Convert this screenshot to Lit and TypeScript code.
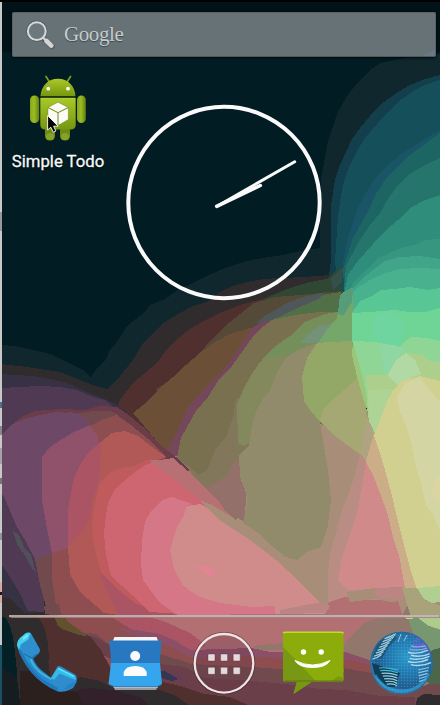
import { LitElement, html, css, svg } from "lit";
import { customElement } from "lit/decorators.js";

// Wallpaper colour bands, painted back to front.
const BANDS: [string, string][] = [
  ["#011218", "0,0 440,0 440,52 0,52"],
  ["#10272e", "440,54 420,56 400,59 380,63 369,71 360,80 350,92 343,103 337,114 333,127 328,142 325,157 321,180 320,215 320,248 300,251 283,255 262,258 243,262 220,270 205,277 193,283 178,290 165,299 150,305 145,312 136,319 127,326 122,334 116,343 110,350 106,359 97,368 91,377 83,370 67,362 50,354 33,350 15,346 0,345 0,705 440,705"],
  ["#123f4b", "440,75 425,79 410,85 395,94 380,105 370,116 360,128 352,139 347,150 340,165 335,180 331,205 331,260 329,276 340,320 440,320"],
  ["#15505a", "440,80 427,84 415,90 402,99 390,110 377,124 365,138 357,151 350,165 345,178 342,190 338,215 335,262 340,300 440,300"],
  ["#1a5567", "440,130 420,142 400,155 385,168 374,180 366,193 358,207 353,223 347,240 343,262 345,280 440,280"],
  ["#1d6563", "440,133 425,144 410,155 397,167 385,180 376,194 369,209 362,222 352,240 343,270 345,300 440,300"],
  ["#26756d", "440,158 425,165 410,174 398,185 388,199 380,213 370,225 358,243 346,266 343,300 440,300"],
  ["#2f8d7c", "440,195 425,200 410,208 398,220 385,231 373,244 358,261 348,275 343,300 440,300"],
  ["#37967f", "440,239 425,240 415,245 404,247 390,253 377,259 365,271 354,281 345,300 440,300"],
  ["#41a589", "440,259 420,256 400,257 385,261 373,270 362,279 350,291 345,310 440,310"],
  ["#4ab18f", "440,269 420,268 400,269 385,273 370,280 356,289 348,298 345,320 440,320"],
  ["#302b2d", "0,364 27,367 60,372 80,380 95,386 107,389 120,376 133,360 142,345 153,333 165,322 180,313 193,306 207,302 220,292 233,286 247,282 264,279 280,278 305,277 330,275 342,300 350,330 350,480 440,590 440,705 0,705"],
  // Muted ground under the translucent petals
  ["#a88d79", "200,470 350,400 440,450 440,630 330,640 230,560"],
  ["#50302f", "120,400 133,383 145,373 157,363 165,352 173,343 187,331 200,323 220,313 240,305 263,299 300,310 300,400 220,450 170,465 115,415"],
  ["#304734", "263,299 280,292 293,287 310,282 327,279 334,272 343,267 341,290 330,303 310,307"],
  ["#35504b", "331,279 336,273 343,267 342,282 333,290"],
  ["#544a37", "156,389 168,382 183,370 200,353 210,341 225,326 240,314 254,303 275,297 300,295 342,291 340,320 250,400 165,400"],
  ["#527048", "265,321 282,313 296,305 312,298 327,294 341,292 340,315 325,325 290,335"],
  ["#50575a", "256,323 266,315 277,309 287,303 303,297 326,292 318,299 300,307 283,315 272,320"],
  ["#6b4f36", "147,401 160,388 173,377 186,365 200,353 212,344 230,334 250,328 260,330 235,370 207,405 185,440 172,459 133,413 143,405"],
  ["#74485a", "252,328 262,322 276,319 262,331 246,347 235,364 222,381 209,399 195,418 184,437 178,459 166,457 168,448 178,430 187,408 199,395 209,384 221,373 233,357 244,341"],
  ["#b77073", "148,460 176,456 225,500 235,525 205,515"],
  ["#78704e", "177,457 181,438 187,427 196,411 208,397 218,381 232,366 242,352 252,338 260,329 272,320 295,315 320,312 337,312 337,560 280,560 220,500 195,475"],
  ["#82775b", "177,457 187,465 199,475 207,470 215,450 226,437 233,418 236,399 246,394 255,500 235,520 205,489"],
  ["#84895d", "237,405 243,390 251,375 261,361 274,350 287,339 300,327 314,318 326,314 350,312 350,345 330,360 290,415 244,446 238,443"],
  ["#748f59", "262,360 274,347 290,336 305,322 325,314 352,310 352,345 315,346 290,354"],
  ["#74927a", "300,343 307,335 320,326 335,323 328,337 315,343"],
  ["#a88d79", "225,505 240,480 318,422 367,453 361,500 352,560 350,603 329,610 297,577"],
  ["#93716a", "205,491 212,485 228,475 234,460 240,463 240,477 246,492 245,522 225,511"],
  ["#928b6b", "270,390 277,373 286,358 298,350 317,343 330,345 325,410 320,422 323,440 328,470 331,500 328,525 321,547 307,552 297,560 286,557 272,546 258,533 243,523 247,503 246,490 240,477 239,455 249,445 252,425 257,410 262,400"],
  ["#76a76a", "342,293 352,288 355,325 353,345 318,343 326,331 337,318"],
  ["#579c78", "340,295 353,288 352,302 343,316 338,313"],
  ["#93a767", "317,343 330,342 352,341 356,370 364,395 370,430 363,456 345,443 332,434 320,422 310,410 304,401 302,377 307,358"],
  ["#a6a873", "320,420 323,410 332,400 344,390 357,379 363,394 367,420 366,440 360,454 347,445 333,434"],
  ["#59c795", "440,288 428,290 410,287 395,289 381,290 372,296 360,301 352,313 353,330 440,330"],
  ["#6ed596", "440,308 425,312 410,312 395,310 370,312 352,313 352,342 375,352 440,352"],
  ["#6fd5a0", "372,327 374,317 387,311 400,319 404,327 401,339 395,347 382,344 374,336"],
  ["#8fd595", "440,341 427,338 412,337 405,341 400,347 385,344 375,342 353,341 355,360 358,380 366,405 374,435 392,400 440,390"],
  ["#8ed6a4", "380,343 398,346 404,350 396,362 389,374 385,374"],
  ["#99c678", "353,342 358,360 362,375 366,392 368,410 365,405 357,377 352,355"],
  ["#aece8c", "366,375 388,375 395,361 402,355 410,353 422,355 432,362 440,362 440,397 390,398 374,435 368,416"],
  ["#b0d9a3", "388,375 396,360 406,353 415,360 421,374 410,378 398,386"],
  ["#add495", "368,390 392,389 388,401 380,420 374,435 369,420"],
  ["#afa382", "367,416 375,434 367,464 360,455"],
  ["#b98c84", "360,453 367,462 373,480 405,587 400,600 365,600 328,606 328,570 331,550 336,533 342,510 350,490 355,475"],
  ["#cbae87", "375,430 366,461 368,480 403,590 417,590 409,550 397,517 391,492 385,470 379,450"],
  ["#cf8a89", "366,462 362,486 357,513 350,535 342,557 338,580 347,590 375,590 405,588 399,555 393,537 387,512 380,493 373,475"],
  ["#d2d090", "440,381 420,376 403,380 393,390 387,402 380,420 374,435 379,450 385,470 391,492 397,517 404,545 410,568 417,590 440,590"],
  ["#d3d6a3", "397,397 405,383 420,377 430,390 440,402 440,530 433,515 426,505 421,483 416,466 411,443 406,425 400,412"],
  ["#dcd5a1", "440,475 434,482 432,492 438,503 440,505"],
  ["#363143", "0,374 33,376 50,379 67,383 85,391 100,397 118,405 130,415 60,440 45,560 35,613 24,613 10,598 0,597"],
  ["#302b2d", "83,389 95,391 110,391 127,390 121,399 116,400 102,397"],
  ["#503a53", "0,388 40,386 60,387 77,390 93,397 105,400 118,410 80,450 44,560 44,612 28,611 18,590 8,574 0,562"],
  ["#6b3d49", "13,423 23,416 35,411 60,409 85,410 100,406 117,407 126,413 147,430 160,445 176,457 190,470 180,475 160,480 100,420 30,425"],
  ["#704a4d", "66,412 80,413 93,411 111,411 119,415 105,424 91,426 83,417"],
  ["#6e4867", "0,436 13,424 24,419 40,415 57,412 79,414 91,424 98,436 101,443 105,540 67,549 52,553 35,559 26,542 16,525 6,501 0,490"],
  ["#50505a", "13,531 19,535 24,547 31,555 36,573 33,570 26,557 17,544"],
  ["#8f526a", "42,457 50,447 62,439 74,432 90,425 96,432 101,443 93,530 68,549 52,553 48,534 42,500"],
  ["#704a4d", "35,559 52,553 60,560 64,590 64,614 48,614 40,585"],
  ["#8e4d4f", "90,426 104,419 117,415 131,425 148,439 167,457 152,464 100,455 98,436"],
  ["#8e4d4f", "52,553 68,548 80,570 90,590 110,600 150,612 150,650 92,650 77,640 64,625 56,605 52,578"],
  ["#ab5564", "101,442 88,453 80,465 75,476 72,487 68,510 68,547 84,529 96,514 105,475"],
  ["#b15956", "101,442 112,433 125,431 138,436 151,446 166,457 148,463 125,480 110,540 125,600 126,616 104,613 80,592 70,574 68,547 84,529 91,516 92,502 99,481"],
  ["#ab5564", "98,571 106,577 115,586 139,603 153,611 190,613 190,633 156,641 120,622 114,606"],
  ["#c05b5d", "100,482 109,473 121,468 135,466 149,459 158,474 120,510 113,560 130,590 151,609 136,604 115,587 101,572 95,551 92,530 93,512"],
  ["#b77073", "150,460 160,460 173,458 189,472 207,490 220,503 231,520 210,520 181,500 160,480"],
  ["#d08b8b", "187,506 196,497 213,508 230,520 250,538 270,552 290,566 310,589 328,603 325,620 200,620 183,586 170,550 177,527"],
  ["#cd6670", "145,465 152,463 174,479 202,501 210,510 190,545 185,585 190,604 180,614 150,612 132,595 111,576 106,555 104,533 106,515 108,503 115,489 130,476"],
  ["#d57786", "163,500 171,497 192,504 187,506 183,517 177,527 170,550 174,569 183,586 200,597 220,603 252,607 275,606 275,620 185,620 160,603 143,580 141,565 142,540 145,522 151,511"],
  ["#d08b8b", "187,506 200,504 213,511 230,530 240,580 210,598 183,586 174,569 170,550 177,527 183,517"],
  ["#e08591", "191,566 207,566 213,569 217,575 210,577 201,570"],
  ["#a88d79", "200,501 212,505 230,516 252,533 275,552 296,570 317,590 333,607 322,605 300,582 276,560 250,540 218,519"],
  ["#b27073", "140,616 260,614 325,614 329,602 345,597 370,600 398,601 403,616 440,650 440,705 230,705 180,650"],
  ["#a88d79", "346,592 375,588 403,587 402,601 390,602 375,599 350,602"],
  ["#ba8583", "375,588 403,588 403,600 375,597"],
  ["#ba8583", "280,610 300,606 322,602 330,606 326,613 280,614"],
  ["#ab5564", "110,616 146,616 166,622 190,633 206,645 190,655 156,645"],
  ["#92776c", "347,640 357,630 365,622 380,618 402,616 410,600 440,610 440,650 430,705 370,705 343,648"],
  ["#92776c", "253,646 270,644 286,643 286,650 256,650"],
  ["#a9a37c", "402,588 417,588 425,600 440,606 440,635 422,629 410,614"],
  ["#b0cf90", "417,588 440,586 440,602 432,603 424,599"],
  ["#d0cd8c", "403,616 413,616 413,619 406,619"],
  ["#aecb8c", "417,617 440,617 440,629 429,626"],
  ["#779771", "408,619 418,618 427,625 440,630 440,670 424,665 416,641"],
  ["#8b5068", "105,626 130,629 160,634 176,641 190,650 252,648 270,652 345,652 370,660 372,705 200,705 150,660 108,645"],
  ["#8e4d4f", "56,614 80,616 110,622 125,632 160,642 175,649 192,658 252,656 290,659 350,660 375,666 375,705 130,705"],
  ["#704a4d", "80,632 96,634 112,647 160,654 192,664 253,667 290,670 343,668 372,673 424,686 440,678 440,705 150,705 105,653"],
  ["#4c664c", "425,660 432,650 440,648 440,684 430,684 424,679"],
  ["#6b3f49", "77,633 95,637 112,646 112,660 160,664 185,667 205,678 253,681 285,684 320,689 346,690 380,696 415,697 415,705 200,705 90,648"],
  ["#653e56", "159,674 168,671 180,675 188,681 174,680"],
  ["#50302f", "38,615 52,614 60,628 75,633 90,636 101,650 110,667 120,682 163,682 180,686 205,694 230,697 248,705 70,705 51,684 47,650"],
  ["#363653", "160,671 165,671 178,679 172,681 161,678"],
  ["#62512f", "54,616 66,616 67,621 78,629 88,637 80,635 64,630 58,626"],
  ["#704a4d", "44,606 59,604 61,615 53,615 45,614"],
  ["#302b2d", "80,677 100,681 112,687 160,690 176,696 189,705 65,705 65,690"],
  ["#302b2d", "0,597 10,599 22,612 38,616 44,626 48,643 49,660 35,680 20,705 0,705"],
  ["#32202a", "76,690 90,688 113,690 140,697 148,705 76,705"],
  ["#2c201e", "20,671 30,671 49,687 78,692 82,705 20,705"],
  ["#032026", "0,616 6,618 10,626 13,637 15,652 17,672 17,678 7,673 0,665"],
  ["#151d21", "0,665 7,671 17,678 19,692 20,705 0,705"],
  ["#302b2d", "416,705 417,698 424,694 440,695 440,705"],
];

@customElement("home-wallpaper")
class HomeWallpaper extends LitElement {
  static styles = css`
    :host { display: block; }
    .art { display: block; width: 440px; height: 705px; }
  `;
  render() {
    return html`<svg class="art" viewBox="0 0 440 705" shape-rendering="crispEdges">
      <rect width="440" height="705" fill="#021c23" />
      ${BANDS.map(([fill, pts]) => svg`<polygon points=${pts} fill=${fill} />`)}
      <rect width="2" height="705" fill="#c6c9c6" />
      <rect y="212" width="2" height="19" fill="#959b9b" />
      <rect y="402" width="2" height="6" fill="#536f87" />
      <rect y="426" width="2" height="9" fill="#858989" />
      <rect y="448" width="2" height="16" fill="#a0a5a5" />
      <rect y="478" width="2" height="6" fill="#727878" />
      <rect y="533" width="2" height="7" fill="#909797" />
      <rect y="582" width="2" height="21" fill="#d5a7a5" />
      <rect y="592" width="2" height="3" fill="#191919" />
      <rect y="645" width="2" height="60" fill="#1b5064" />
      <rect width="440" height="2" fill="#000" />
    </svg>`;
  }
}

@customElement("search-bar")
class SearchBar extends LitElement {
  static styles = css`
    :host { display: block; }
    .bar {
      display: flex; align-items: center; gap: 10px; height: 45px; box-sizing: border-box;
      padding-left: 14px; border-radius: 2px; border: 1px solid #586264; border-bottom-color: #4d5a58;
      background: linear-gradient(156deg, transparent 97.5%, #697987 97.5%), #677276;
      box-shadow: 0 1px 3px #000c12;
    }
    .glass { width: 29px; height: 30px; flex: none; margin-left: -1px; }
    .name {
      font: 21px/24px "Liberation Serif", serif; color: #c5cbce; letter-spacing: -0.4px;
      text-shadow: 0 1px 1px #39454a; margin: -1px 0 0 -1px;
    }
  `;
  render() {
    return html`<div class="bar">
      <svg class="glass" viewBox="0 0 29 30">
        <path d="M18.5 19.5 26 26.5" stroke="#515c60" stroke-width="5.5" stroke-linecap="round" />
        <circle cx="10.8" cy="11.2" r="8.9" fill="none" stroke="#4f5b60" stroke-width="3.4" />
        <circle cx="10.8" cy="11.2" r="8.9" fill="#6c787c" stroke="#d8dad9" stroke-width="2" />
        <path d="M17 17.5 20.5 21" stroke="#d3d5d4" stroke-width="2.3" />
        <path d="M20.5 21 25.3 25.7" stroke="#d3d5d4" stroke-width="4.6" stroke-linecap="round" />
      </svg>
      <span class="name">Google</span>
    </div>`;
  }
}

@customElement("app-shortcut")
class AppShortcut extends LitElement {
  static styles = css`
    :host { display: block; }
    .cell { display: flex; flex-direction: column; align-items: center; width: 92px; }
    .robot { width: 60px; height: 70px; }
    .label {
      font: 400 16.7px/20px Roboto, sans-serif; color: #f7f9f9; white-space: nowrap;
      text-shadow: 0 1px 2px #000; margin-top: 9px; -webkit-text-stroke: 0.3px #f7f9f9;
    }
  `;
  render() {
    return html`<div class="cell">
      <svg class="robot" viewBox="28 73 60 70">
        <defs>
          <linearGradient id="skin" x2="0" y2="1"><stop stop-color="#a9c828" /><stop offset="1" stop-color="#76960f" /></linearGradient>
          <linearGradient id="limb"><stop stop-color="#87a51c" /><stop offset=".45" stop-color="#9cbc24" /><stop offset="1" stop-color="#60800d" /></linearGradient>
        </defs>
        <path d="M46 76.5 49.5 82M70.5 76.5 67 82" stroke="#809c20" stroke-width="1.7" stroke-linecap="round" />
        <rect x="45" y="125" width="10" height="15.5" rx="4.5" fill="#6d8b12" />
        <rect x="60" y="125" width="10" height="15.5" rx="4.5" fill="#6d8b12" />
        <ellipse cx="50" cy="136.5" rx="4" ry="3.5" fill="#86a22a" />
        <ellipse cx="65" cy="136.5" rx="4" ry="3.5" fill="#86a22a" />
        <rect x="30" y="95.5" width="9.2" height="27.5" rx="4.5" fill="url(#limb)" />
        <rect x="77" y="95.5" width="8.8" height="27.5" rx="4.4" fill="url(#limb)" />
        <path d="M40.5 96.3C41 86 48 78.8 58 78.8s17 7.2 17.5 17.5Z" fill="url(#skin)" />
        <path d="M40.3 98H75.7V124.5q0 5-5 5H45.3q-5 0-5-5Z" fill="url(#skin)" />
        <path d="M40.3 97.1H75.7" stroke="#203608" stroke-width="1.2" />
        <path d="M41 98.3H75" stroke="#b8d343" stroke-width=".7" />
        <circle cx="48.3" cy="88.7" r="1.9" fill="#f6f9eb" />
        <circle cx="68" cy="88.7" r="1.9" fill="#f6f9eb" />
        <path d="M48 107.5 58 102.2 68.3 107.5V119.5L58 125.5 48 119.8Z" fill="#fbfbf8" stroke="#5f7a12" stroke-width=".4" />
        <path d="M48 107.5 58 112.7 68.3 107.5M58 112.7V125" fill="none" stroke="#7b9721" stroke-width="1.1" />
        <path d="M47.6 115.5V130l3.2-2.8 2.4 5 2.7-1.2-2.3-4.8h4.5Z" fill="#050505" stroke="#fff" stroke-width=".9" />
      </svg>
      <span class="label">Simple Todo</span>
    </div>`;
  }
}

@customElement("analog-clock")
class AnalogClock extends LitElement {
  static styles = css`
    :host { display: block; }
    .face { display: block; width: 198px; height: 198px; }
  `;
  render() {
    return html`<svg class="face" viewBox="125 104 198 198">
      <circle cx="224" cy="202.5" r="95.7" fill="none" stroke="#fafafa" stroke-width="4" />
      <path d="M217 206.3 294.7 161.7" stroke="#fafafa" stroke-width="3" stroke-linecap="round" />
      <path d="M216.7 206.3 260.3 185.5" stroke="#fafafa" stroke-width="3.6" stroke-linecap="round" />
    </svg>`;
  }
}

@customElement("home-dock")
class HomeDock extends LitElement {
  static styles = css`
    :host { display: block; }
    .line { height: 2px; margin: 0 1px 0 9px; background: #c9b9b8; opacity: .85; box-shadow: 0 0 1px 0.5px #9b8585; }
    .row { display: flex; align-items: center; justify-content: space-between; padding: 11px 5px 0 14px; }
    .icon { width: 66px; height: 70px; flex: none; }
    .contacts { margin: 0 1px 0 -1px; }
    .drawer { margin: 0 1px 0 -1px; }
  `;
  phone() {
    return html`<svg class="icon" viewBox="14 628 66 70">
      <defs><linearGradient id="ph" x1="0" y1="0" x2="1" y2="1"><stop stop-color="#2da5d4" /><stop offset=".5" stop-color="#2687c7" /><stop offset="1" stop-color="#2b91d4" /></linearGradient></defs>
      <path d="M17 645Q17 641 20 638L26 633Q29 631.5 31 633.5L39.7 649Q40.5 652 38 654L33 658.7Q36 666 43 671.5L51 677.8 57.5 666.5Q59 665.7 61 666.5L75 674.5Q77.5 676.5 76.5 682L73 688Q66 692.5 58 691.5 42 685 31 672 20 658 17 645Z" fill="url(#ph)" />
      <path d="M22 651Q30 670 43 679.5L58 688 57 691Q41 684 30 670.5 20 657.5 17.5 647Z" fill="#1f70b3" opacity=".75" />
      <path d="M21 645 29 640 31 635 39.7 650 38 653.5 32 658 24 654Z" fill="#2f8fce" />
      <path d="M17 645Q17 641 20 638L26 633 30.5 633 28 639.5 20.5 644.5 19 650Z" fill="#43d0ec" />
      <path d="M23 639 28 635" stroke="#7aeafa" stroke-width="2" />
      <path d="M24 654 32 658 37 654" fill="none" stroke="#2071b0" stroke-width="1.2" />
      <path d="M30.5 659Q34 668 43 674.5L51.5 679.5" fill="none" stroke="#3fb4e2" stroke-width="2" />
      <path d="M54 679 59 670 75.5 679 75 684 72 687 62 690 52 684Z" fill="#2f8dcd" />
      <path d="M51 678 58 667.3 75.5 676.5 76 680 69 677.5 59.5 673.5 54 680Z" fill="#32bce6" />
      <path d="M58.5 668.5 74 676.5" stroke="#5be2f6" stroke-width="1.5" />
      <path d="M62 691 74 687 76.5 681 68 684.5Z" fill="#1f7cc0" opacity=".6" />
    </svg>`;
  }
  contacts() {
    return html`<svg class="icon contacts" viewBox="102 628 66 70">
      <path d="M114.5 637H156.5L159 643H112Z" fill="#f3f5f6" />
      <path d="M112 684H159L156 690H115Z" fill="#969a9e" />
      <path d="M113 686H158L157.5 688H114Z" fill="#b9babb" />
      <path d="M109 641 113 640.5H157.5L161.7 641.5 160 658V663.3H111L110.5 653Z" fill="#2878c1" />
      <path d="M111 663H160L162 684Q159 686.5 156 686.5H114L108.5 684Z" fill="#35a6ed" />
      <path d="M109 684.5 114 686.5H157L161.5 684.5" fill="none" stroke="#2177b7" stroke-width=".8" />
      <circle cx="135.2" cy="656" r="5" fill="#fafafa" />
      <path d="M123.7 676V672Q126 666 135.2 666T146.7 672V676Z" fill="#fafafa" />
    </svg>`;
  }
  drawer() {
    return html`<svg class="icon drawer" viewBox="191 628 66 70">
      <circle cx="224" cy="663.3" r="29.8" fill="#663747" fill-opacity=".28" stroke="#39202a" stroke-width="3" stroke-opacity=".5" />
      <circle cx="224" cy="663.3" r="29.3" fill="none" stroke="#eee3e5" stroke-width="2.3" />
      ${[654, 667.3].map((y) => [208, 220.6, 233.2].map((x) => svg`<rect x=${x} y=${y} width="7" height="7" rx=".7" fill="#e5d9dc" stroke="#54313c" stroke-width=".4" />`))}
    </svg>`;
  }
  message() {
    return html`<svg class="icon" viewBox="280 628 66 70">
      <path d="M285 632H341.5Q343.5 632 343.5 634V679.5Q343.5 681.5 341.5 681.5H312L293.5 694 297 681.5H285Q283 681.5 283 679.5V634Q283 632 285 632Z" fill="#8cac0c" />
      <path d="M283 647 297 661Q305 669 324 671L343.5 678V679.5Q343.5 681.5 341.5 681.5H312L293.5 694 297 681.5H285Q283 681.5 283 679.5Z" fill="#789713" />
      <path d="M297 661 310 675 316 681H332L343.5 672V669L333 660Z" fill="#8cac0c" />
      <path d="M283.3 633.2Q284 632.3 286 632.3H341Q343 632.3 343.3 633.5" fill="none" stroke="#c1dd27" stroke-width="1.6" />
      <path d="M285 681H341.5" stroke="#5a7411" stroke-width="1" />
      <circle cx="303.5" cy="652" r="2.7" fill="#fff" /><circle cx="321.2" cy="652" r="2.7" fill="#fff" />
      <path d="M295 660.5Q299 667.5 312.5 667.5T330 660.5Q321 665 312.5 665T295 660.5Z" fill="#fff" stroke="#fff" />
    </svg>`;
  }
  globe() {
    const rows = (n: number) => Array.from({ length: n }, (_, i) => i);
    return html`<svg class="icon" viewBox="369 628 66 70">
      <defs>
        <radialGradient id="sea" cx=".58" cy=".4" r=".62"><stop stop-color="#2f9fcf" /><stop offset=".5" stop-color="#2379b1" /><stop offset=".8" stop-color="#235f8f" /><stop offset="1" stop-color="#318fc1" /></radialGradient>
        <pattern id="dots" width="3" height="3" patternUnits="userSpaceOnUse"><circle cx="1" cy="1" r=".6" fill="#123f72" /><rect x="2" y="2" width="1" height="1" fill="#3ca4cd" /></pattern>
        <clipPath id="ball"><circle cx="401.5" cy="663" r="31" /></clipPath>
      </defs>
      <circle cx="401.5" cy="663" r="31.3" fill="url(#sea)" />
      <g clip-path="url(#ball)" fill="none">
        <circle cx="401.5" cy="663" r="31" fill="url(#dots)" opacity=".5" />
        <path d="M378 641 390 633 397 638 388 648 382 659 373 656Z" fill="#1d587f" />
        <path d="M372 663 381 666 388 669 400 673 395 687 387 687 375 676Z" fill="#103d59" />
        ${rows(8).map((i) => svg`<path d=${`M${372.5 + i * 1.7} ${659 - i * 2.9}q5 -1 ${9 + i * 0.3} ${-4.5 - i * 0.1}`} stroke="#a8d1dc" stroke-width="1.2" />`)}
        ${rows(7).map((i) => svg`<path d=${`M${379 + i * 1.3} ${668 + i * 2.7}q8 -1 ${19 - i * 1.5} 2`} stroke=${i < 2 ? "#43bcd2" : "#9acfdd"} stroke-width="1.2" />`)}
        ${rows(7).map((i) => svg`<path d=${`M${411 - (i % 3) * 1.5} ${646 + i * 3.1}q10 2.5 20 -2`} stroke=${i < 2 ? "#9a9be6" : "#b4d8ea"} stroke-width="1.4" />`)}
        ${rows(5).map((i) => svg`<path d=${`M${418 + i * 0.3} ${670 + i * 2.9}l${11 - i} -2.5`} stroke="#91c3df" stroke-width="1.2" />`)}
        <path d="M396 633 392 639M401 634 398 642M391 634 385 639M407 635 404 641" stroke="#9cc6d6" />
        <path d="M409 633Q426 638 431 656M413 641 421 639M415 645 427 643" stroke="#8256d2" stroke-width="1.4" />
        <path d="M375 675Q384 691 402 691T429 674" stroke="#38a7dd" stroke-width="3" opacity=".6" />
      </g>
      <circle cx="401.5" cy="663" r="30.7" fill="none" stroke="#236b9d" stroke-width="1" />
    </svg>`;
  }
  render() {
    return html`<div class="line"></div>
      <div class="row">${this.phone()}${this.contacts()}${this.drawer()}${this.message()}${this.globe()}</div>`;
  }
}

@customElement("app-root")
class AppRoot extends LitElement {
  static styles = css`
    :host { display: block; position: relative; width: 440px; height: 705px; overflow: hidden; }
    .wall { position: absolute; inset: 0; }
    .screen { position: relative; display: flex; flex-direction: column; height: 705px; }
    .search { margin: 12px 4px 0 12px; }
    .desk { display: flex; align-items: flex-start; flex: 1; padding: 16px 0 0 12px; }
    .clock { margin: 31px 0 0 21px; }
    .dock { height: 90px; }
  `;
  render() {
    return html`<home-wallpaper class="wall"></home-wallpaper>
      <main class="screen">
        <search-bar class="search"></search-bar>
        <section class="desk">
          <app-shortcut></app-shortcut>
          <analog-clock class="clock"></analog-clock>
        </section>
        <home-dock class="dock"></home-dock>
      </main>`;
  }
}
